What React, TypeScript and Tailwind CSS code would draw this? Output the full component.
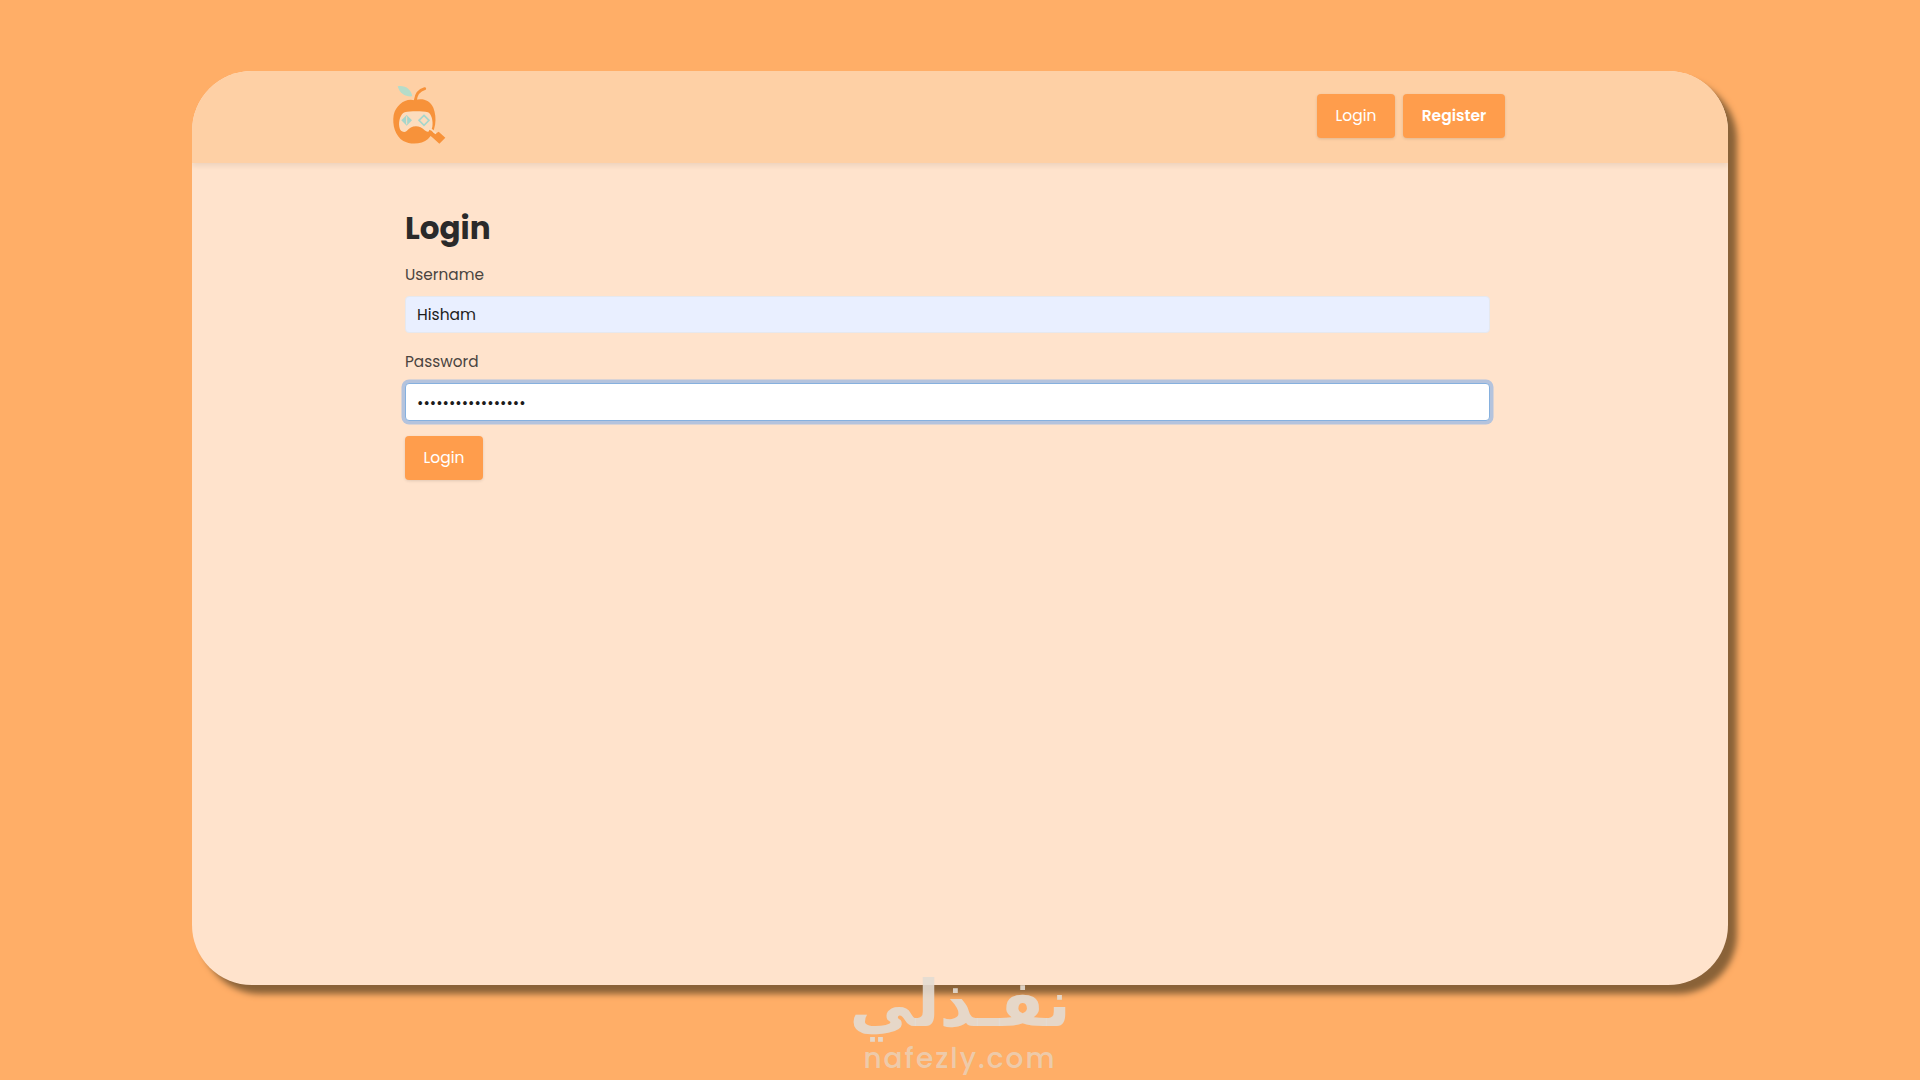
const font = "font-['Poppins','Inter','Liberation_Sans',sans-serif]";

function Logo() {
    return (
        <svg viewBox="0 0 240 240" className="w-[80px] h-[80px] shrink-0 -mt-[4px]">
            <path d="M53 34C75 30 93 42 97 64C76 66 59 56 53 34Z" fill="#b5dcc9"/>
            <path d="M106 76C108 60 116 46 134 41" fill="none" stroke="#f7923a" strokeWidth="9" strokeLinecap="round"/>
            <path d="M104 76C124 68 150 74 160 98C172 128 168 170 144 192C126 208 92 210 70 198C46 184 36 150 41 120C48 90 76 68 104 76Z" fill="#f7923a"/>
            <path d="M74 112C92 108 126 108 144 112C154 116 160 138 157 156C154 170 142 174 134 166C126 158 118 154 108 154C96 154 88 160 80 168C72 174 60 170 58 156C55 138 62 116 74 112Z" fill="#fcdcbd"/>
            <path d="M80 120L96 136L80 152L64 136Z" fill="#a6d6cb"/>
            <path d="M80 124V148" stroke="#fcdcbd" strokeWidth="3"/>
            <path d="M132 121L147 136L132 151L117 136Z" fill="none" stroke="#a6d6cb" strokeWidth="5"/>
            <path d="M148 164L166 176L176 170L196 188L178 206L160 190L144 176Z" fill="#f7923a"/>
            <path d="M150 160L168 176" stroke="#fcdcbd" strokeWidth="5"/>
        </svg>
    );
}

function Field({label, className, value, type}: {label: string, className: string, value: string, type: string}) {
    return (
        <div className="flex flex-col">
            <label className="text-[15.3px] leading-[24px] text-[#4a443f] mb-[9px]">{label}</label>
            <input type={type} value={value} readOnly
                   className={"w-[1085px] rounded-[4px] px-[11px] text-[15.5px] text-[#1c1c1c] outline-none " + className}/>
        </div>
    );
}

export default function App() {
    const btn = "flex items-center justify-center h-[44px] rounded-[4px] bg-[#ff9d4c] text-white text-[15.5px] shadow-[0_1px_3px_rgba(0,0,0,0.12)]";

    return (
        <div className={"relative w-full h-screen overflow-hidden bg-[#ffae67] pt-[71px] pl-[192px] " + font}>
            <div className="w-[1536px] h-[914px] rounded-[60px] bg-[#ffe3cc] shadow-[9px_9px_6px_#8a6238] overflow-hidden flex flex-col">
                <header className="h-[92px] shrink-0 bg-[#fed0a5] shadow-[0_3px_5px_rgba(0,0,0,0.07)] flex items-center justify-between pl-[188px] pr-[223px]">
                    <Logo/>
                    <div className="flex gap-[8px] -mt-[3px]">
                        <a className={btn + " w-[78px]"}>Login</a>
                        <a className={btn + " w-[102px] font-semibold"}>Register</a>
                    </div>
                </header>
                <main className="pl-[213px] pt-[41px] flex flex-col">
                    <h1 className="text-[31px] leading-[48px] font-bold text-[#2a2a2a] mb-[11px]">Login</h1>
                    <Field label="Username" type="text" value="Hisham" className="h-[37px] bg-[#e9efff] border border-[#e6e8ee]"/>
                    <div className="h-[17px]"/>
                    <Field label="Password" type="password" value="Hisham1234567890x"
                           className="h-[38px] bg-white border border-[#86b0de] shadow-[0_0_0_3.5px_#b4c3dd]"/>
                    <button className={btn + " w-[78px] mt-[15px]"}>Login</button>
                </main>
            </div>
            <div className="absolute left-[830px] top-[966px] w-[260px] flex flex-col items-center pointer-events-none">
                <span dir="rtl" className="font-['DejaVu_Sans',sans-serif] font-bold text-[65px] leading-[76px] text-[#e3dcd3]/90">نفـذلي</span>
                <span className="font-['Poppins','Inter',sans-serif] font-medium text-[28px] leading-[34px] tracking-[2px] text-[#e9d3bd]/80">nafezly.com</span>
            </div>
        </div>
    );
}
